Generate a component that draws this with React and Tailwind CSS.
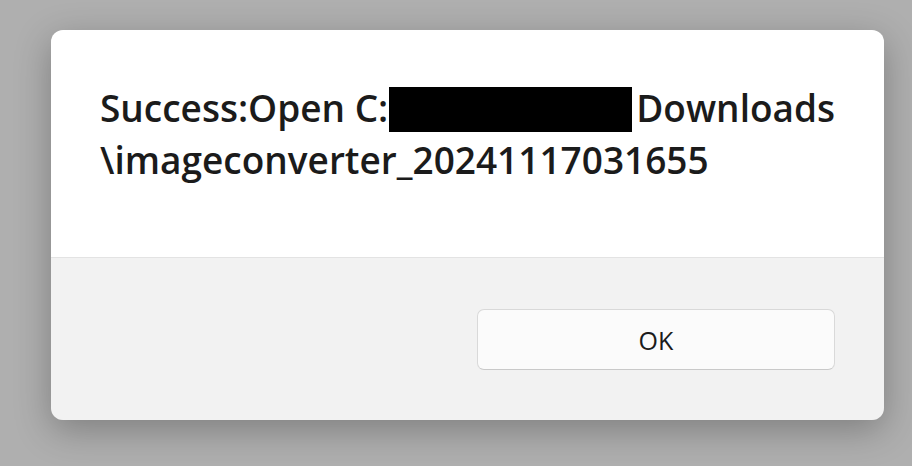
export default function App() {
  return (
    <div className="w-[912px] h-[466px] bg-[#afafaf] pt-[30px] pl-[51px] overflow-hidden" style={{ fontFamily: '"Open Sans", "Noto Sans", sans-serif' }}>
      <div className="w-[833px] h-[390px] rounded-[12px] overflow-hidden flex flex-col shadow-[0_10px_36px_rgba(0,0,0,0.28)]">
        <div className="h-[228px] bg-white pl-[49px] pt-[52px] border-b border-[#e3e3e3]">
          <p className="text-[37px] leading-[52px] font-semibold text-[#1b1b1b]">
            Success:Open C:<span className="inline-block align-[-10px] ml-[1px] mr-[4px] w-[243px] h-[45px] bg-black"></span>Downloads
            <br />
            \imageconverter_20241117031655
          </p>
        </div>
        <div className="flex-1 bg-[#f2f2f2] flex items-center justify-end pr-[49px]">
          <button className="w-[358px] h-[61px] pt-[4px] rounded-[7px] bg-[#fbfbfb] border border-[#d9d9d9] border-b-[#c9c9c9] text-[25px] text-[#1b1b1b]">
            OK
          </button>
        </div>
      </div>
    </div>
  );
}
